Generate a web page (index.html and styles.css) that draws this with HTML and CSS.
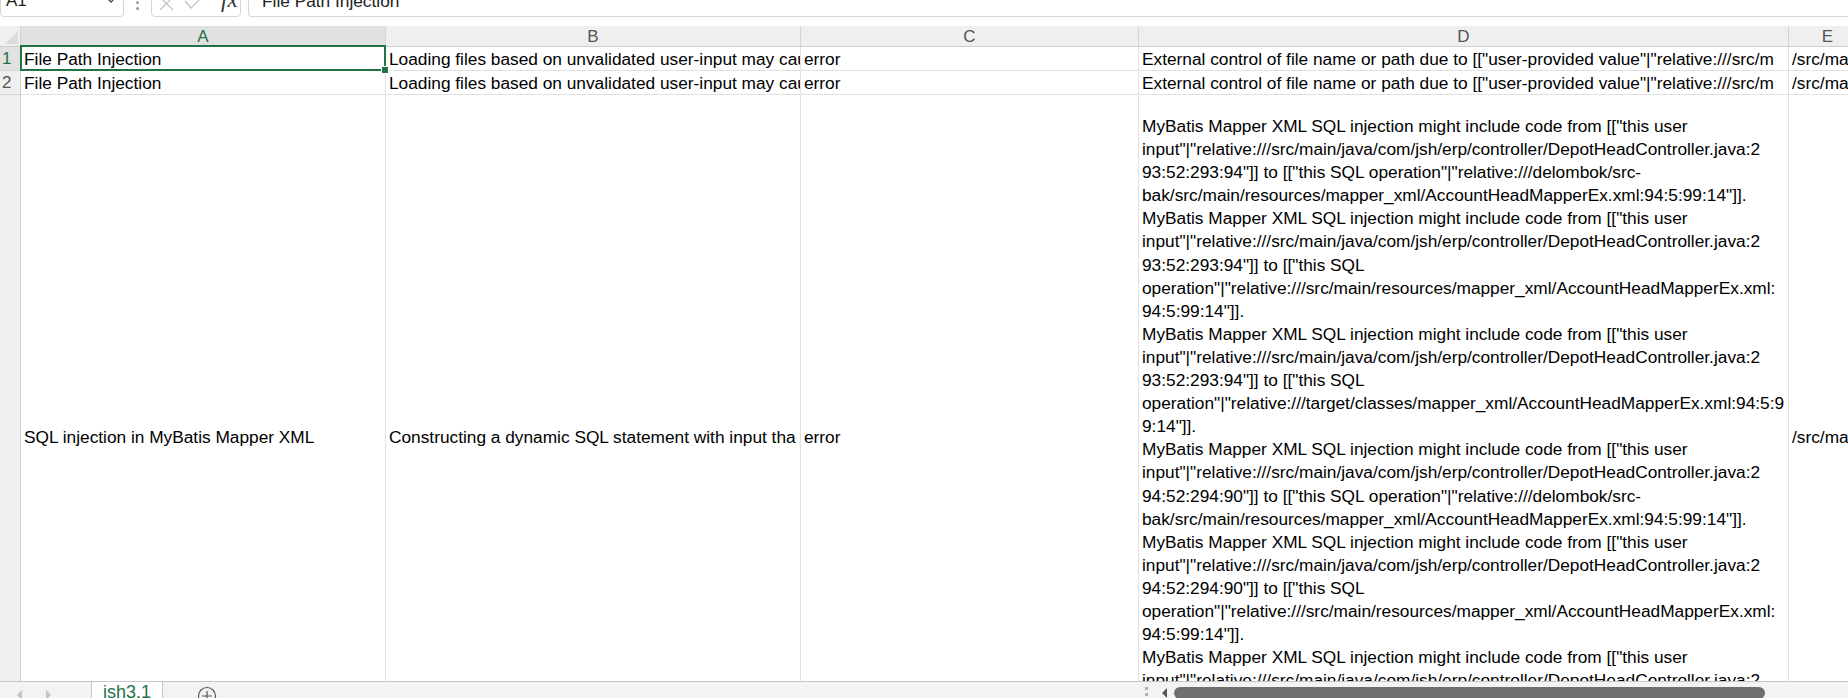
FILE: index.html
```html
<!DOCTYPE html>
<html>
<head>
<meta charset="utf-8">
<link rel="stylesheet" href="styles.css">
</head>
<body>
<div class="app">
  <div class="toolbar">
    <div class="namebox">
      <span class="namebox-text">A1</span>
      <svg class="chev" width="14" height="8" viewBox="0 0 14 8"><path d="M1 0 L7 6 L13 0" fill="none" stroke="#444" stroke-width="1.3"/></svg>
    </div>
    <div class="vdots"><span></span><span></span></div>
    <div class="fbtns">
      <svg class="fbtn" width="18" height="12" viewBox="0 0 18 12"><path d="M2 -3 L15 10 M15 -3 L2 10" fill="none" stroke="#c4c4c4" stroke-width="1.3"/></svg>
      <svg class="fbtn" width="20" height="12" viewBox="0 0 20 12"><path d="M1 1 L7 8 L19 -4" fill="none" stroke="#c4c4c4" stroke-width="1.3"/></svg>
      <span class="fx">fx</span>
    </div>
    <div class="formula"><span class="formula-text">File Path Injection</span></div>
  </div>

  <div class="sheet">
    <div class="grid">
      <div class="corner"><svg width="21" height="21" viewBox="0 0 21 21"><path d="M18 5 L18 18 L5 18 Z" fill="#dcdcdc"/></svg></div>
      <div class="colhead sel">A</div>
      <div class="colhead">B</div>
      <div class="colhead">C</div>
      <div class="colhead">D</div>
      <div class="colhead">E</div>

      <div class="rowhead sel">1</div>
      <div class="cell active">File Path Injection</div>
      <div class="cell">Loading files based on unvalidated user-input may cau</div>
      <div class="cell">error</div>
      <div class="cell">External control of file name or path due to [["user-provided value"|"relative:///src/m</div>
      <div class="cell">/src/ma</div>

      <div class="rowhead">2</div>
      <div class="cell">File Path Injection</div>
      <div class="cell">Loading files based on unvalidated user-input may cau</div>
      <div class="cell">error</div>
      <div class="cell">External control of file name or path due to [["user-provided value"|"relative:///src/m</div>
      <div class="cell">/src/ma</div>

      <div class="rowhead tall"></div>
      <div class="cell tall">SQL injection in MyBatis Mapper XML</div>
      <div class="cell tall">Constructing a dynamic SQL statement with input tha</div>
      <div class="cell tall">error</div>
      <div class="cell tall wrap"><div class="lines">MyBatis Mapper XML SQL injection might include code from [["this user
input"|"relative:///src/main/java/com/jsh/erp/controller/DepotHeadController.java:2
93:52:293:94"]] to [["this SQL operation"|"relative:///delombok/src-
bak/src/main/resources/mapper_xml/AccountHeadMapperEx.xml:94:5:99:14"]].
MyBatis Mapper XML SQL injection might include code from [["this user
input"|"relative:///src/main/java/com/jsh/erp/controller/DepotHeadController.java:2
93:52:293:94"]] to [["this SQL
operation"|"relative:///src/main/resources/mapper_xml/AccountHeadMapperEx.xml:
94:5:99:14"]].
MyBatis Mapper XML SQL injection might include code from [["this user
input"|"relative:///src/main/java/com/jsh/erp/controller/DepotHeadController.java:2
93:52:293:94"]] to [["this SQL
operation"|"relative:///target/classes/mapper_xml/AccountHeadMapperEx.xml:94:5:9
9:14"]].
MyBatis Mapper XML SQL injection might include code from [["this user
input"|"relative:///src/main/java/com/jsh/erp/controller/DepotHeadController.java:2
94:52:294:90"]] to [["this SQL operation"|"relative:///delombok/src-
bak/src/main/resources/mapper_xml/AccountHeadMapperEx.xml:94:5:99:14"]].
MyBatis Mapper XML SQL injection might include code from [["this user
input"|"relative:///src/main/java/com/jsh/erp/controller/DepotHeadController.java:2
94:52:294:90"]] to [["this SQL
operation"|"relative:///src/main/resources/mapper_xml/AccountHeadMapperEx.xml:
94:5:99:14"]].
MyBatis Mapper XML SQL injection might include code from [["this user
input"|"relative:///src/main/java/com/jsh/erp/controller/DepotHeadController.java:2</div></div>
      <div class="cell tall">/src/ma</div>
    </div>
  </div>

  <div class="tabbar">
    <div class="navs">
      <svg width="8" height="10" viewBox="0 0 8 10"><path d="M6 0 L1 5 L6 10 Z" fill="#c4c4c4"/></svg>
      <svg width="8" height="10" viewBox="0 0 8 10"><path d="M2 0 L7 5 L2 10 Z" fill="#c4c4c4"/></svg>
    </div>
    <div class="tab">ish3.1</div>
    <div class="addsheet"><svg width="20" height="20" viewBox="0 0 20 20"><circle cx="10" cy="10" r="8.5" fill="none" stroke="#555" stroke-width="1.2"/><path d="M10 5 V15 M5 10 H15" stroke="#555" stroke-width="1.2"/></svg></div>
    <div class="spacer"></div>
    <div class="hdots"><span></span><span></span></div>
    <svg class="hleft" width="6" height="10" viewBox="0 0 6 10"><path d="M5 0 L0 5 L5 10 Z" fill="#555"/></svg>
    <div class="thumb"></div>
    <div class="trail"></div>
  </div>
</div>
</body>
</html>
```

FILE: styles.css
```css
* { box-sizing: border-box; }
html, body { margin: 0; padding: 0; }
body {
  width: 1848px;
  height: 698px;
  overflow: hidden;
  background: #ffffff;
  font-family: "Liberation Sans", Arial, sans-serif;
  color: #000;
}
.app {
  display: flex;
  flex-direction: column;
  width: 1848px;
  height: 698px;
}

/* ---------- toolbar ---------- */
.toolbar {
  height: 26px;
  flex: none;
  display: flex;
  align-items: flex-start;
  overflow: hidden;
}
.namebox {
  width: 124px;
  height: 30px;
  margin-top: -13px;
  border: 1px solid #d6d6d6;
  border-radius: 4px;
  display: flex;
  align-items: center;
  padding: 0 5px 0 5px;
}
.namebox-text {
  flex: 1;
  font-size: 17px;
  color: #222;
  position: relative;
  top: -1px;
}
.chev { position: relative; top: -2px; }
.vdots {
  width: 27px;
  display: flex;
  flex-direction: column;
  align-items: center;
  gap: 3px;
  padding-top: 1px;
}
.vdots span {
  width: 3px;
  height: 3px;
  background: #9a9a9a;
  border-radius: 50%;
}
.fbtns {
  width: 90px;
  height: 30px;
  margin-top: -13px;
  border: 1px solid #d6d6d6;
  border-radius: 4px;
  display: flex;
  align-items: flex-start;
  padding-left: 6px;
  padding-top: 12px;
  gap: 8px;
}
.fbtn { display: block; }
.fx {
  font-family: "Liberation Serif", "Times New Roman", serif;
  font-style: italic;
  font-size: 23px;
  line-height: 22px;
  color: #333;
  margin-top: -11px;
  margin-left: 9px;
}
.formula {
  flex: 1;
  height: 30px;
  margin-top: -13px;
  margin-left: 7px;
  border: 1px solid #d6d6d6;
  border-right: none;
  border-radius: 4px 0 0 4px;
  display: flex;
  align-items: center;
  padding-left: 13px;
}
.formula-text {
  font-size: 17.3px;
  color: #222;
  position: relative;
  top: -1px;
}

/* ---------- sheet ---------- */
.sheet {
  flex: 1;
  overflow: hidden;
  min-height: 0;
}
.grid {
  display: grid;
  grid-template-columns: 21px 365px 415px 338px 650px 78px;
  grid-template-rows: 21px 24px 24px 684px;
  width: 1867px;
}
.corner {
  background: #efefef;
  border-right: 1px solid #cfcfcf;
  border-bottom: 1px solid #cfcfcf;
}
.corner svg { display: block; }
.colhead {
  background: #efefef;
  border-right: 1px solid #d4d4d4;
  border-bottom: 1px solid #cfcfcf;
  display: flex;
  align-items: center;
  justify-content: center;
  font-size: 17px;
  color: #555;
  padding-top: 1px;
}
.colhead.sel {
  background: #e1e1e1;
  color: #217346;
  border-bottom: 2px solid #217346;
  padding-top: 2px;
}
.rowhead {
  background: #efefef;
  border-right: 1px solid #cfcfcf;
  border-bottom: 1px solid #d4d4d4;
  display: flex;
  align-items: center;
  padding-left: 2px;
  font-size: 17px;
  color: #555;
}
.rowhead.sel {
  background: #e1e1e1;
  color: #217346;
}
.cell {
  border-right: 1px solid #e1e1e1;
  border-bottom: 1px solid #e1e1e1;
  display: flex;
  align-items: center;
  padding: 1px 3px 0 3px;
  font-size: 17.3px;
  white-space: nowrap;
  overflow: hidden;
  color: #000;
}
.cell.active {
  position: relative;
  overflow: visible;
  z-index: 2;
}
.cell.active::before {
  content: "";
  position: absolute;
  left: -1px;
  top: -2px;
  right: -1px;
  bottom: -1px;
  border: 2px solid #217346;
  pointer-events: none;
}
.cell.active::after {
  content: "";
  position: absolute;
  right: -4px;
  bottom: -4px;
  width: 6px;
  height: 6px;
  background: #217346;
  border: 1px solid #fff;
}
.cell.wrap {
  align-items: flex-start;
  padding-top: 20px;
}
.lines {
  white-space: pre;
  line-height: 23.1px;
}

/* ---------- tab bar ---------- */
.tabbar {
  height: 17px;
  flex: none;
  background: #f3f3f3;
  border-top: 1px solid #c6c6c6;
  display: flex;
  align-items: flex-start;
  overflow: hidden;
}
.navs {
  width: 92px;
  display: flex;
  gap: 20px;
  padding-left: 16px;
  padding-top: 8px;
  border-right: 1px solid #c6c6c6;
  height: 30px;
}
.tab {
  width: 71px;
  height: 30px;
  margin-top: -1px;
  background: #ffffff;
  border-right: 1px solid #c6c6c6;
  color: #217346;
  font-size: 18px;
  text-align: center;
  padding-top: 1px;
}
.addsheet {
  width: 88px;
  padding-left: 34px;
  padding-top: 4px;
}
.addsheet svg { display: block; }
.spacer { flex: 1; }
.hdots {
  width: 20px;
  display: flex;
  flex-direction: column;
  align-items: center;
  gap: 3px;
  padding-top: 5px;
}
.hdots span {
  width: 3px;
  height: 3px;
  background: #b0b0b0;
}
.hleft { margin-top: 6px; margin-left: 6px; }
.thumb {
  width: 591px;
  height: 12px;
  margin-top: 5px;
  margin-left: 6px;
  background: #6f6f6f;
  border-radius: 6px;
}
.trail { width: 83px; }
```
